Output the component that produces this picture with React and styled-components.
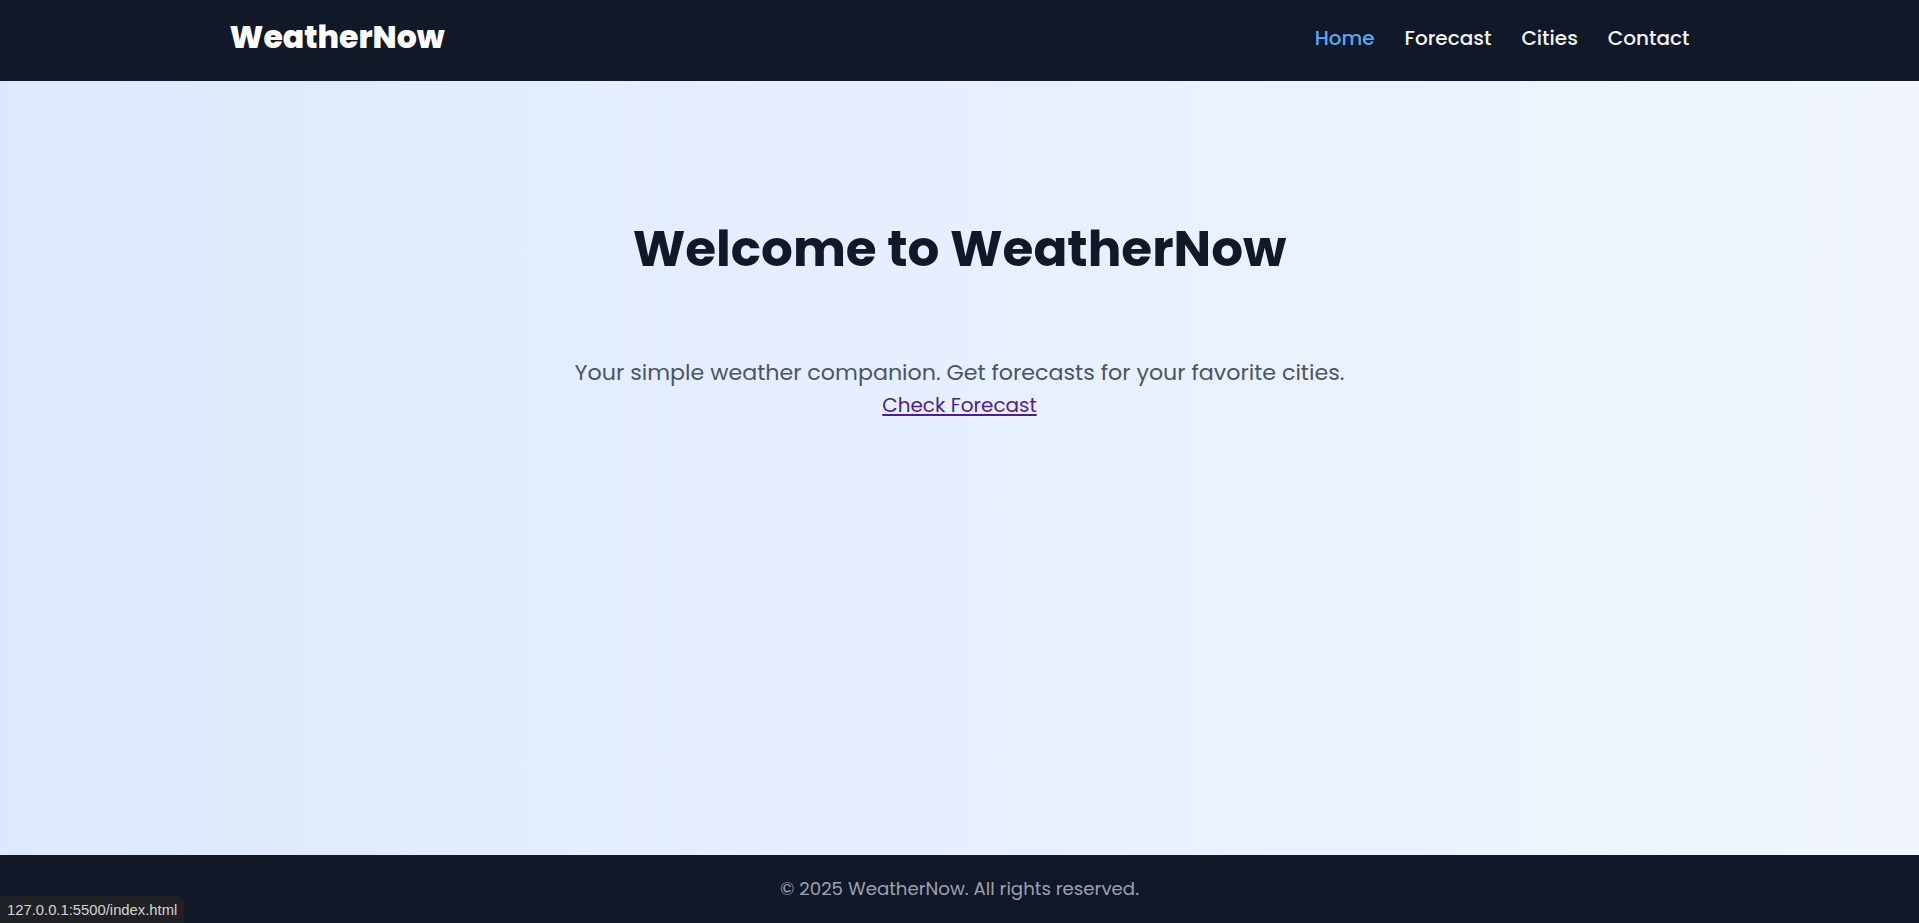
import styled, { createGlobalStyle } from 'styled-components'

const GlobalStyle = createGlobalStyle`
  * {
    box-sizing: border-box;
  }

  html, body {
    margin: 0;
    padding: 0;
  }

  body {
    font-family: 'Poppins', 'Inter', 'Noto Sans', sans-serif;
    background: #111827;
  }
`

const Page = styled.div`
  min-height: 100vh;
  display: flex;
  flex-direction: column;
`

const Header = styled.header`
  height: 81px;
  background: #111827;
  display: flex;
  align-items: center;
`

const Container = styled.div`
  width: 1460px;
  margin: 0 auto;
  display: flex;
  align-items: center;
  justify-content: space-between;
`

const Logo = styled.div`
  color: #ffffff;
  font-size: 31.5px;
  font-weight: 800;
  margin-top: -6px;
`

const Nav = styled.nav`
  display: flex;
  gap: 30px;
  margin-top: -6px;
`

const NavLink = styled.a`
  color: ${(p) => (p.$active ? '#58a8f6' : '#f3f4f6')};
  font-size: 20px;
  font-weight: 500;
  text-decoration: none;
  cursor: pointer;
`

const Main = styled.main`
  flex: 1;
  background: linear-gradient(to right, #dce9fd, #f1f6fe);
  padding-top: 139px;
  text-align: center;
`

const Title = styled.h1`
  margin: 0 0 79px;
  font-size: 50px;
  line-height: 58px;
  font-weight: 700;
  color: #111827;
`

const Lead = styled.p`
  margin: 0;
  font-size: 22.2px;
  line-height: 32px;
  color: #4b5563;
`

const ForecastLink = styled.a`
  display: block;
  width: fit-content;
  margin: 0 auto;
  font-size: 20px;
  line-height: 32px;
  color: #551a8b;
  text-decoration: underline;
  text-underline-offset: 2px;
`

const Footer = styled.footer`
  height: 68px;
  background: #111827;
  display: flex;
  align-items: center;
  justify-content: center;
  color: #98a2b3;
  font-size: 18.2px;
  padding-bottom: 2px;
`

const StatusBar = styled.div`
  position: fixed;
  left: 0;
  bottom: 0;
  height: 27px;
  padding: 0 7px;
  display: flex;
  align-items: center;
  background: #202124;
  color: #d3d5d8;
  font-family: 'Liberation Sans', 'DejaVu Sans', sans-serif;
  font-size: 14.8px;
  border-top-right-radius: 6px;
`

export default function App() {
  return (
    <Page>
      <GlobalStyle />
      <Header>
        <Container>
          <Logo>WeatherNow</Logo>
          <Nav>
            <NavLink $active href="#">Home</NavLink>
            <NavLink href="#">Forecast</NavLink>
            <NavLink href="#">Cities</NavLink>
            <NavLink href="#">Contact</NavLink>
          </Nav>
        </Container>
      </Header>
      <Main>
        <Title>Welcome to WeatherNow</Title>
        <Lead>Your simple weather companion. Get forecasts for your favorite cities.</Lead>
        <ForecastLink href="#">Check Forecast</ForecastLink>
      </Main>
      <Footer>© 2025 WeatherNow. All rights reserved.</Footer>
      <StatusBar>127.0.0.1:5500/index.html</StatusBar>
    </Page>
  )
}
